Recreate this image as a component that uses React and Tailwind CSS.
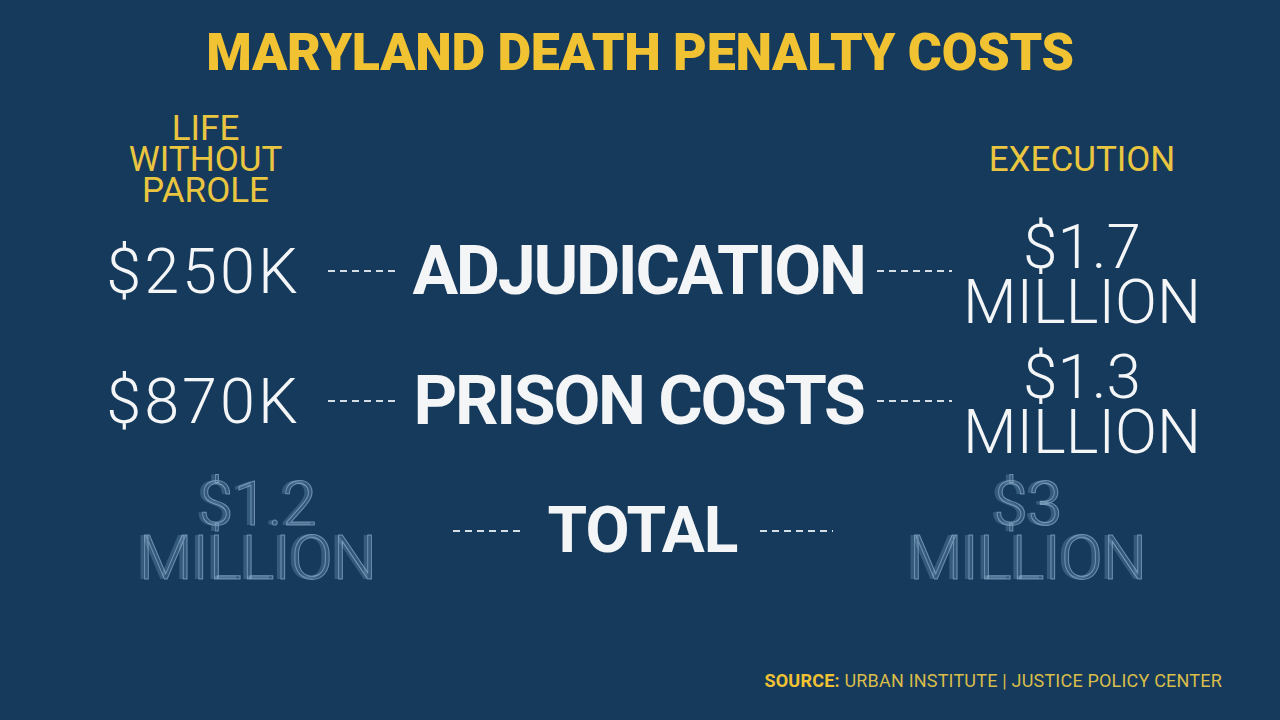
import React from "react";

const rows = [
  { left: "$250K", label: "ADJUDICATION", right: ["$1.7", "MILLION"] },
  { left: "$870K", label: "PRISON COSTS", right: ["$1.3", "MILLION"] },
];

function Dashes({ className = "" }) {
  return (
    <div
      className={`h-[2px] bg-[repeating-linear-gradient(90deg,#d5dee7_0_7px,transparent_7px_12px)] ${className}`}
    ></div>
  );
}

// faded total values: thin light strokes with a doubled copy
const ghost =
  "text-center text-[62px] leading-[54px] font-light text-[#7fa2c2]/30 [-webkit-text-stroke:1px_rgba(170,200,228,0.55)] [text-shadow:-4px_0_0_rgba(130,168,200,0.3)]";

export default function App() {
  return (
    <div
      className="w-[1280px] h-[720px] overflow-hidden bg-[#153a5c] flex flex-col"
      style={{ fontFamily: "Roboto, 'Liberation Sans', sans-serif" }}
    >
      {/* title */}
      <h1 className="mt-[27px] h-[51px] text-center text-[52px] leading-[51px] font-black tracking-[-0.3px] text-[#f1c232]">
        MARYLAND DEATH PENALTY COSTS
      </h1>

      {/* column headers */}
      <div className="mt-[35px] ml-[83px] grid grid-cols-[245px_72px_477px_75px_260px] h-[93px] text-[35px] leading-[31px] text-[#eac540]">
        <div className="text-center">
          LIFE
          <br />
          WITHOUT
          <br />
          PAROLE
        </div>
        <div></div>
        <div></div>
        <div></div>
        <div className="flex items-center justify-center">EXECUTION</div>
      </div>

      {/* cost rows */}
      {rows.map((row, i) => (
        <div
          key={i}
          className="ml-[83px] grid grid-cols-[245px_72px_477px_75px_260px] items-center h-[130px] text-[#f3f5f7]"
        >
          <div className="pr-[4px] text-center text-[63px] leading-[63px] font-light tracking-[3px]">{row.left}</div>
          <Dashes />
          <div className="text-center text-[68px] leading-[68px] font-bold tracking-[-2.3px]">{row.label}</div>
          <Dashes />
          <div className="mt-[6px] text-center text-[62px] leading-[55px] font-light">
            {row.right[0]}
            <br />
            {row.right[1]}
          </div>
        </div>
      ))}

      {/* total row, still fading in */}
      <div className="ml-[83px] grid grid-cols-[350px_72px_195px_73px_350px] gap-x-5 items-center h-[130px]">
        <div className={ghost}>
          $1.2
          <br />
          MILLION
        </div>
        <Dashes />
        <div className="text-center text-[64px] leading-[64px] font-bold tracking-[-1px] text-[#f3f5f7]">TOTAL</div>
        <Dashes />
        <div className={ghost}>
          $3
          <br />
          MILLION
        </div>
      </div>

      {/* source */}
      <div className="mt-[75px] pr-[58px] text-right text-[18px] leading-[20px] tracking-[0.2px] text-[#d9bd4a]">
        <span className="font-bold text-[#f1c232]">SOURCE:</span> URBAN INSTITUTE | JUSTICE POLICY CENTER
      </div>
    </div>
  );
}
